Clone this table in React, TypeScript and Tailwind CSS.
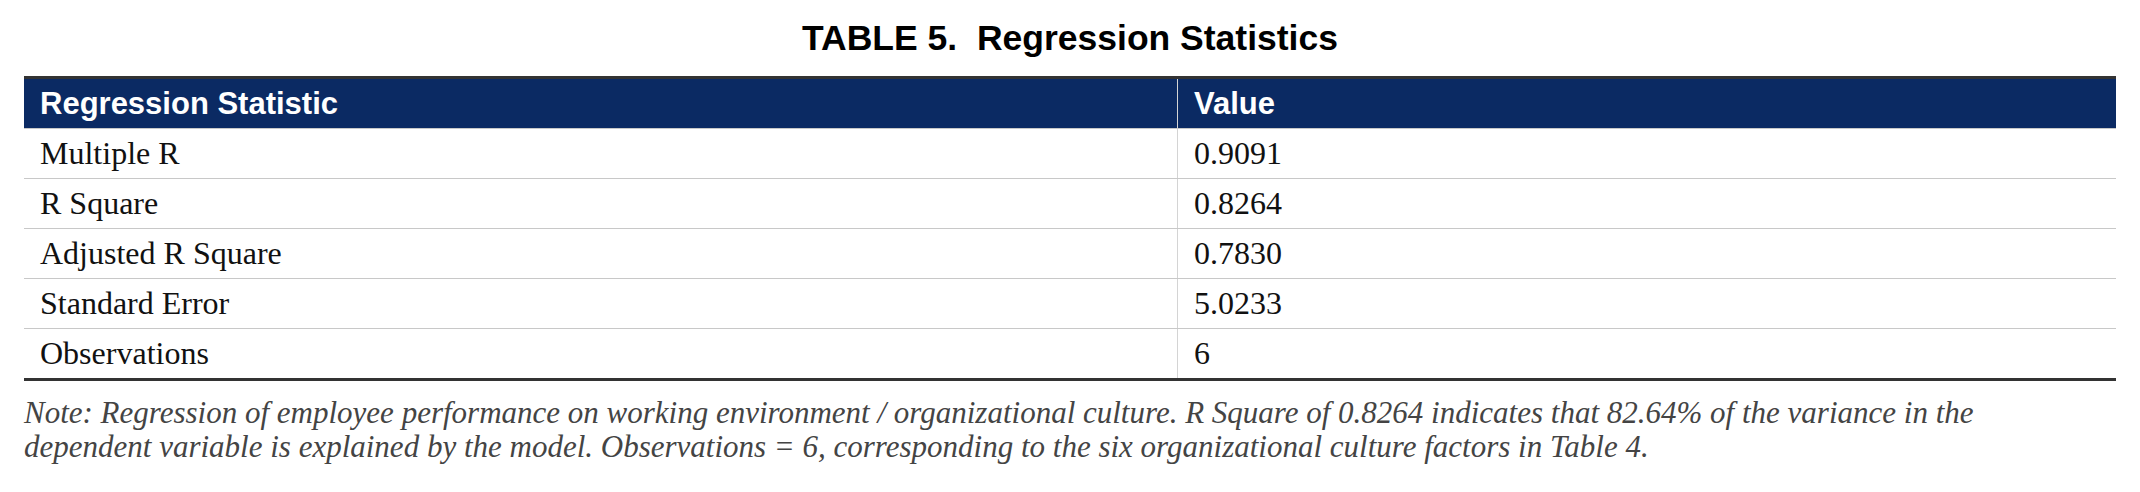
import React from 'react'

interface Row {
    label: string,
    value: string,
};

const rows: Row[] = [
    { label: 'Multiple R', value: '0.9091' },
    { label: 'R Square', value: '0.8264' },
    { label: 'Adjusted R Square', value: '0.7830' },
    { label: 'Standard Error', value: '5.0233' },
    { label: 'Observations', value: '6' },
];

export default function App() {
    return (
        <div className="w-[2140px] h-[492px] bg-white px-6 pt-[18px]">
            <h1 className="text-center font-bold text-[35.5px] leading-[40px] text-black whitespace-pre font-['Liberation_Sans',Arial,sans-serif]">
                TABLE 5.  Regression Statistics
            </h1>

            <div className="mt-[18px] border-t-[3px] border-b-[3px] border-[#333333]">
                {/* header */}
                <div className="grid grid-cols-[1153px_1fr] bg-[#0b2a63] text-white border-b border-[#c8c8c8] font-bold text-[31px] leading-[33px] font-['Liberation_Sans',Arial,sans-serif]">
                    <div className="px-4 py-2">Regression Statistic</div>
                    <div className="px-4 py-2 border-l border-[#d4d4d4]">Value</div>
                </div>

                {rows.map((row, i) => (
                    <div
                        key={row.label}
                        className={`grid grid-cols-[1153px_1fr] text-[#111111] text-[32px] leading-[33px] font-['Liberation_Serif','Times_New_Roman',serif] ${i < rows.length - 1 ? 'border-b border-[#c8c8c8]' : ''}`}
                    >
                        <div className="px-4 py-2">{row.label}</div>
                        <div className="px-4 py-2 border-l border-[#d4d4d4]">{row.value}</div>
                    </div>
                ))}
            </div>

            <p className="mt-[15px] italic text-[31px] leading-[34px] text-[#444444] font-['Liberation_Serif','Times_New_Roman',serif]">
                Note: Regression of employee performance on working environment / organizational culture. R Square of 0.8264 indicates that 82.64% of the variance in the
                <br />
                dependent variable is explained by the model. Observations = 6, corresponding to the six organizational culture factors in Table 4.
            </p>
        </div>
    )
}
